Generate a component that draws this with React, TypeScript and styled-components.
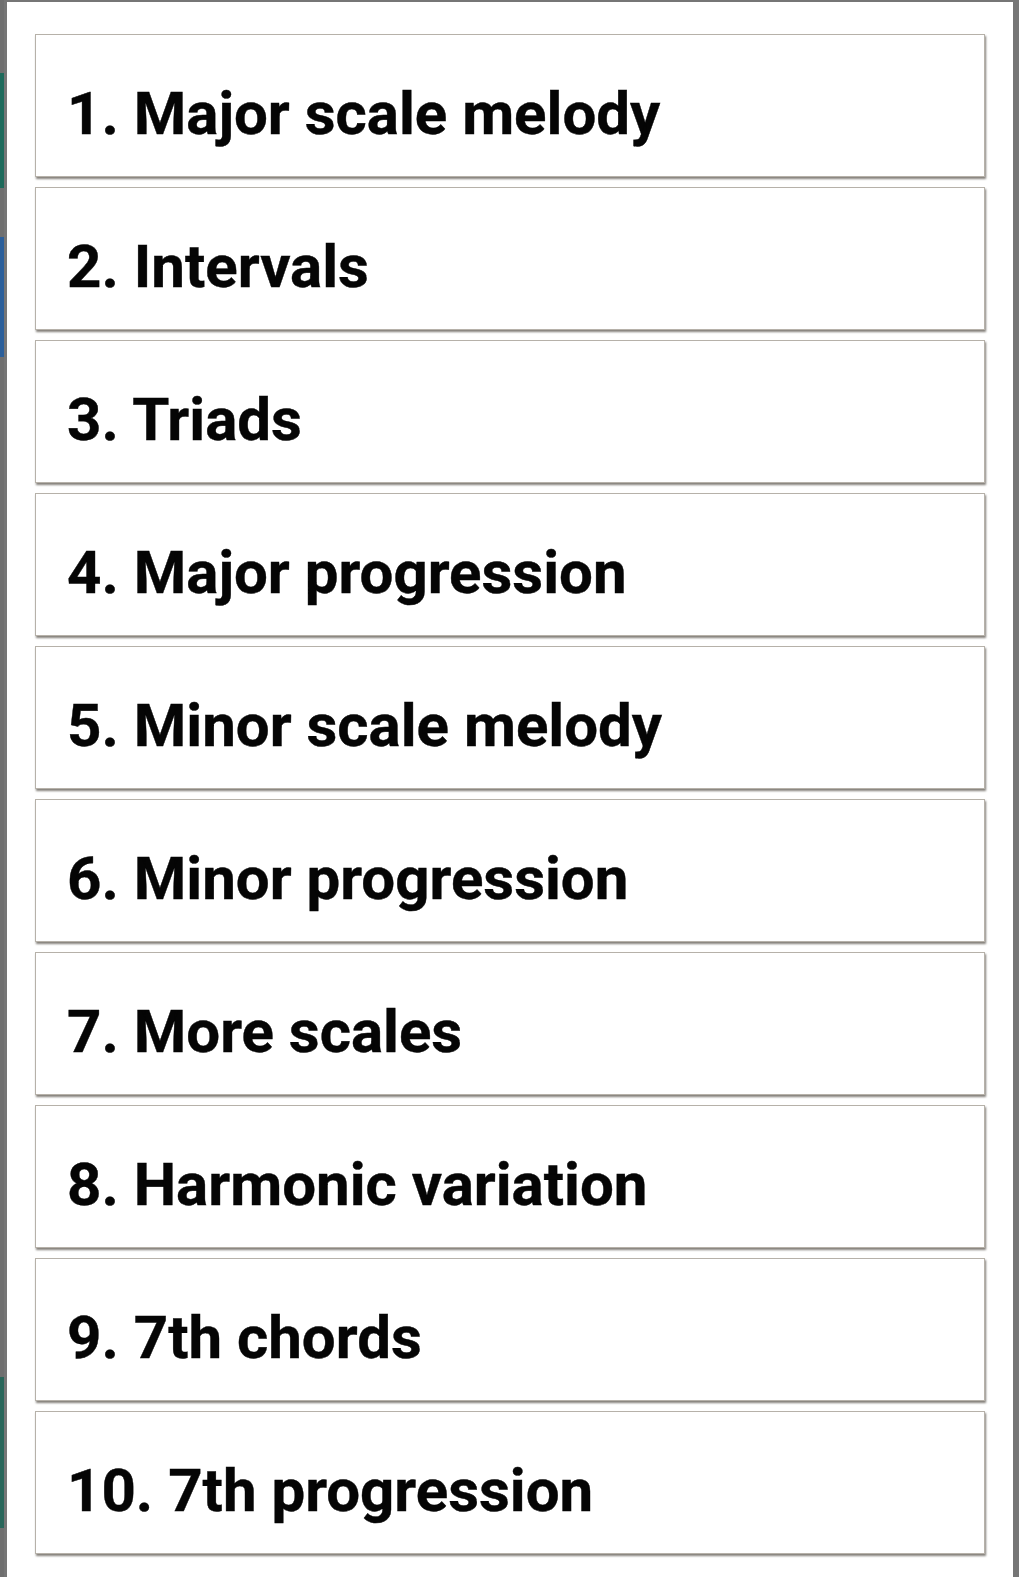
import React from 'react';
import styled, { createGlobalStyle } from 'styled-components';

const GlobalStyle = createGlobalStyle`
  html, body {
    margin: 0;
    padding: 0;
    background: #7b7b7b;
  }
  body {
    font-family: Roboto, "Noto Sans", "Liberation Sans", sans-serif;
  }
`;

const lessons = [
  '1. Major scale melody',
  '2. Intervals',
  '3. Triads',
  '4. Major progression',
  '5. Minor scale melody',
  '6. Minor progression',
  '7. More scales',
  '8. Harmonic variation',
  '9. 7th chords',
  '10. 7th progression',
];

const Screen = styled.div`
  display: flex;
  width: 1019px;
  height: 1577px;
  overflow: hidden;
  background: #767676;
`;

const BehindStrip = styled.div`
  width: 4px;
  flex-shrink: 0;
  display: flex;
  flex-direction: column;
  background: #6f6f6f;
`;

const BehindBlock = styled.div<{ top: number; size: number; color: string }>`
  margin-top: ${(p) => p.top}px;
  height: ${(p) => p.size}px;
  background: ${(p) => p.color};
`;

const Dialog = styled.div`
  margin: 2px 0 0 3px;
  width: 1006px;
  flex-shrink: 0;
  background: #ffffff;
  padding: 32px 0 0 28px;
  box-sizing: border-box;
`;

const List = styled.div`
  display: flex;
  flex-direction: column;
  gap: 10px;
`;

const Item = styled.div`
  width: 950px;
  height: 143px;
  box-sizing: border-box;
  border: 1px solid #b6b1a9;
  box-shadow: 1px 2px 2px #84807a;
  background: #ffffff;
  display: flex;
  align-items: center;
  padding: 16px 0 0 31px;
  font-size: 60px;
  font-weight: 700;
  color: #050505;
  -webkit-text-stroke: 0.4px #050505;
`;

export default function App() {
  return (
    <>
      <GlobalStyle />
      <Screen>
        <BehindStrip>
          <BehindBlock top={73} size={115} color="#1d6a5b" />
          <BehindBlock top={49} size={120} color="#2b5f9b" />
          <BehindBlock top={1020} size={151} color="#28665a" />
        </BehindStrip>
        <Dialog>
          <List>
            {lessons.map((title) => (
              <Item key={title}>{title}</Item>
            ))}
          </List>
        </Dialog>
      </Screen>
    </>
  );
}
